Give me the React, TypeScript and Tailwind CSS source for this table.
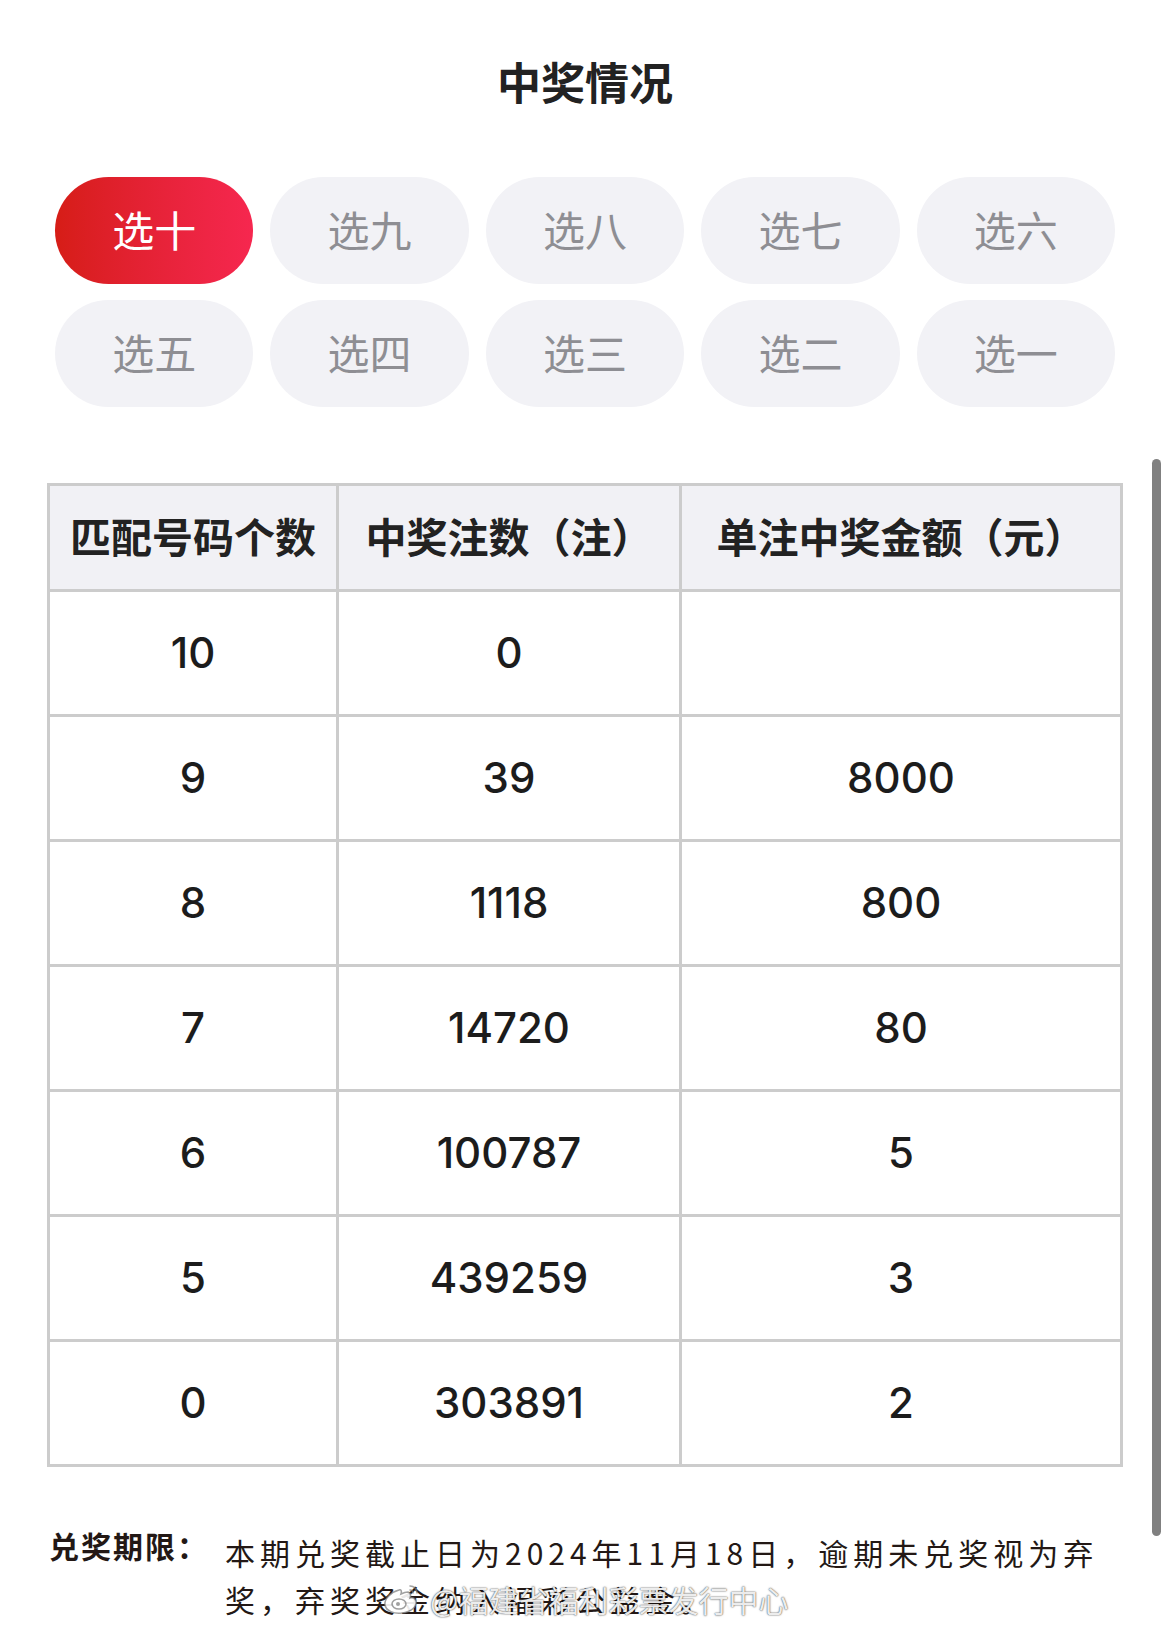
import React from "react";

const tabs = ["选十", "选九", "选八", "选七", "选六", "选五", "选四", "选三", "选二", "选一"];
const rows: [string, string, string][] = [
  ["10", "0", ""],
  ["9", "39", "8000"],
  ["8", "1118", "800"],
  ["7", "14720", "80"],
  ["6", "100787", "5"],
  ["5", "439259", "3"],
  ["0", "303891", "2"],
];

const cjk = { fontFamily: '"Noto Sans CJK SC", "Noto Sans", sans-serif' };
const num = { fontFamily: 'Inter, "Noto Sans CJK SC", sans-serif' };

function WeiboLogo() {
  return (
    <svg width="40" height="34" viewBox="0 0 40 34" fill="none">
      <path
        d="M17 8c-8 2-15 9-14 15 1 6 9 9 17 8 9-1 15-6 14-12-1-3-4-4-6-3 1-3 1-5-2-6-2 0-5 1-7 2 1-3 0-5-2-4z"
        fill="rgba(255,255,255,0.9)"
        stroke="rgba(120,120,120,0.7)"
        strokeWidth="1.6"
      />
      <ellipse cx="17" cy="22" rx="7" ry="5" fill="none" stroke="rgba(120,120,120,0.7)" strokeWidth="1.6" />
      <circle cx="16" cy="22" r="2" fill="rgba(120,120,120,0.7)" />
      <path d="M28 4c4 0 7 3 7 7" stroke="rgba(120,120,120,0.7)" strokeWidth="1.6" strokeLinecap="round" />
      <path d="M28 8c2 0 3 1 3 3" stroke="rgba(120,120,120,0.7)" strokeWidth="1.6" strokeLinecap="round" />
    </svg>
  );
}

export default function App() {
  return (
    <div className="relative w-[1170px] h-[1629px] overflow-hidden bg-white" style={cjk}>
      <h1 className="mt-[59px] text-center text-[44px] leading-[44px] font-bold text-[#222222]">中奖情况</h1>

      <div className="mt-[74px] px-[55px] grid grid-cols-5 gap-x-[17px] gap-y-[16px]">
        {tabs.map((t, i) => (
          <div
            key={t}
            className={
              i === 0
                ? "h-[107px] pb-[4px] rounded-full flex items-center justify-center text-[42px] text-white bg-gradient-to-r from-[#d61d16] to-[#f6274f]"
                : "h-[107px] pb-[4px] rounded-full flex items-center justify-center text-[42px] text-[#8e8e93] bg-[#f2f2f6]"
            }
          >
            {t}
          </div>
        ))}
      </div>

      <div className="mt-[76px] ml-[47px] w-[1076px] bg-[#cccccc] p-[3px] grid grid-cols-[286px_340px_438px] gap-[3px]">
        {["匹配号码个数", "中奖注数（注）", "单注中奖金额（元）"].map((h) => (
          <div key={h} className="h-[103px] pb-[4px] bg-[#f1f1f5] flex items-center justify-center text-[41px] font-semibold text-[#222222] whitespace-nowrap">
            {h}
          </div>
        ))}
        {rows.map((r, ri) =>
          r.map((c, ci) => (
            <div
              key={ri + "-" + ci}
              className="h-[122px] pb-[2px] bg-white flex items-center justify-center text-[42px] font-medium text-[#1c1c1c]"
              style={num}
            >
              {c}
            </div>
          ))
        )}
      </div>

      <div className="relative mt-[62px] ml-[49px] flex items-start text-[#231815]">
        <div className="w-[176px] shrink-0 text-[30px] leading-[33px] font-bold tracking-[2px]">兑奖期限：</div>
        <div className="text-[30px] leading-[47px] tracking-[5px]">
          <div className="whitespace-nowrap">本期兑奖截止日为2024年11月18日，逾期未兑奖视为弃</div>
          <div className="whitespace-nowrap">奖，弃奖奖金纳入福彩公益金。</div>
        </div>
        <div className="absolute left-[333px] top-[52px] flex items-center gap-[8px]">
          <WeiboLogo />
          <span
            className="text-[30px] leading-[36px] text-white/90 whitespace-nowrap"
            style={{ textShadow: "0 0 2px rgba(0,0,0,0.55), 0 0 1px rgba(0,0,0,0.6)" }}
          >
            @福建省福利彩票发行中心
          </span>
        </div>
      </div>

      <div className="absolute left-[1152px] top-[459px] w-[9px] h-[1077px] rounded-full bg-[#808080]" />
    </div>
  );
}
